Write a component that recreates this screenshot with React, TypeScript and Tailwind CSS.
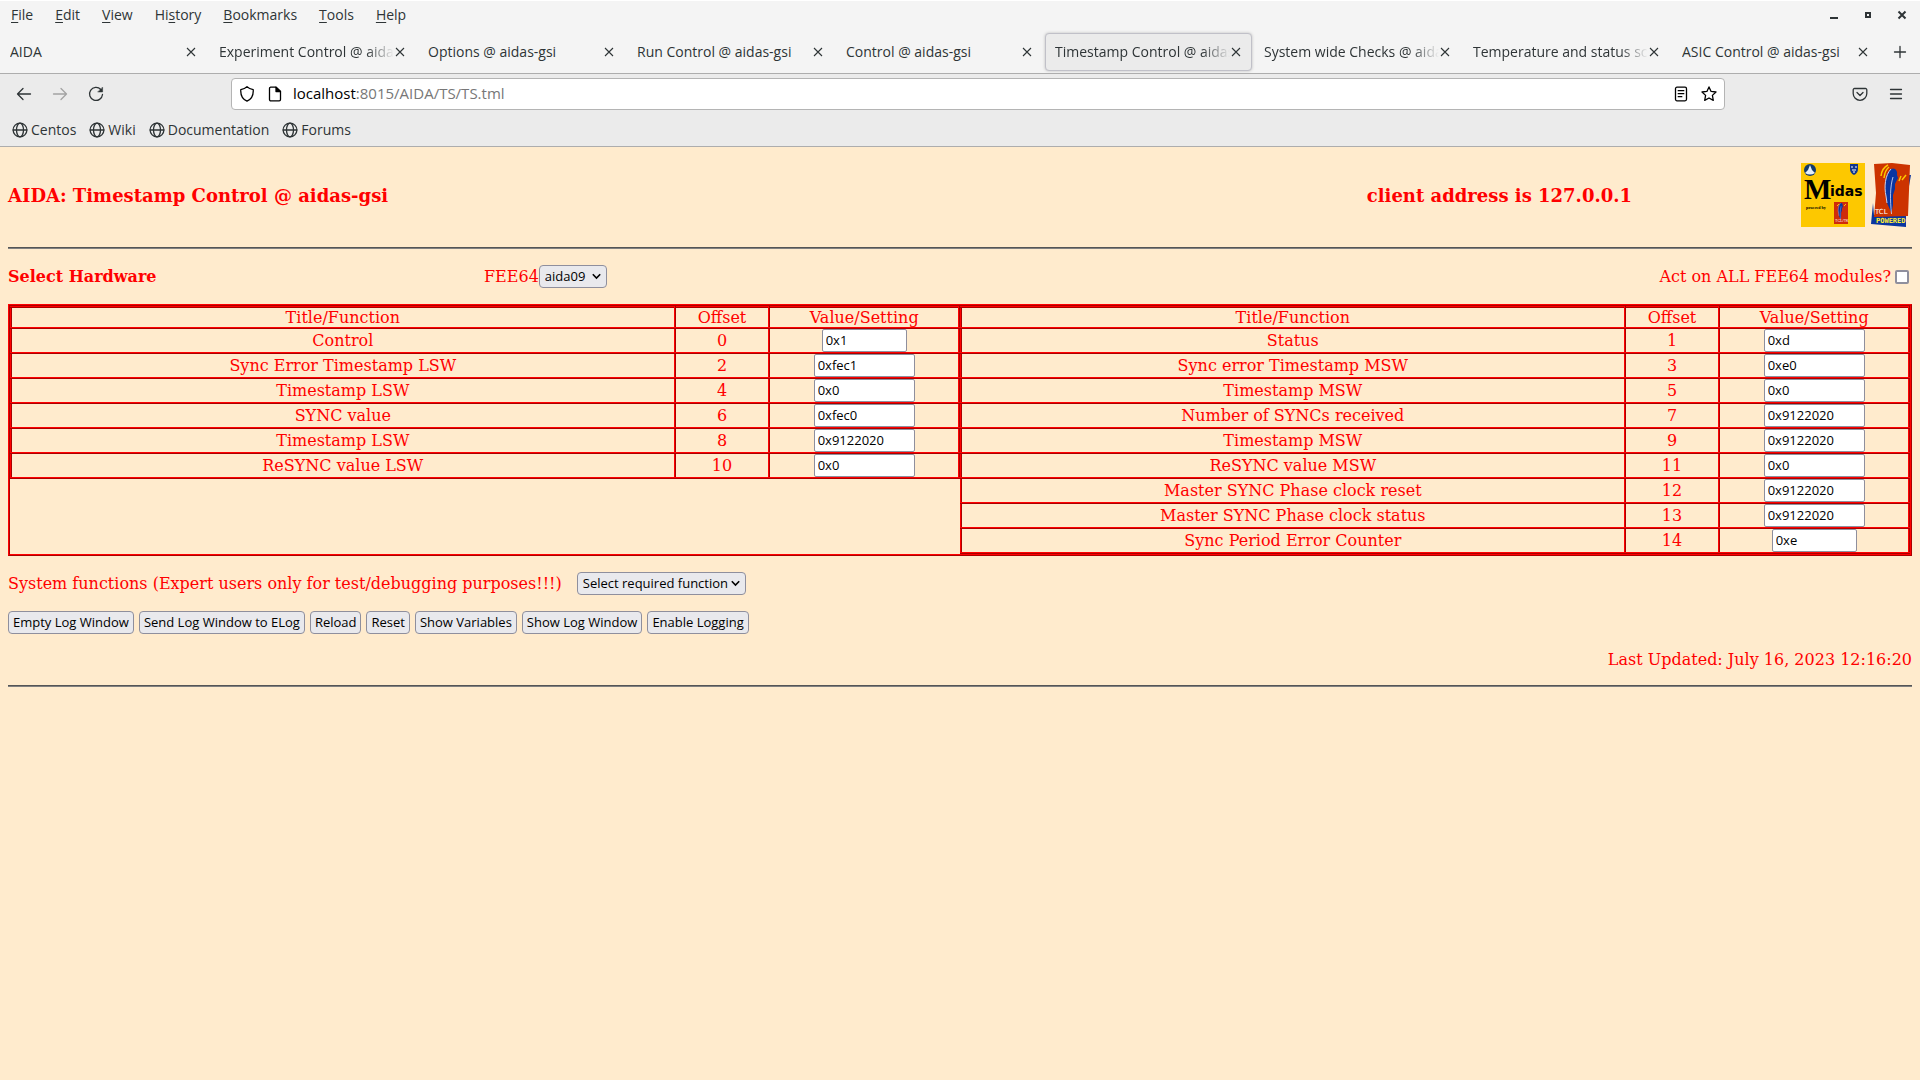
import clsx from 'clsx'
import type { ReactNode } from 'react'

const menus = [
  ['', 'F', 'ile'],
  ['', 'E', 'dit'],
  ['', 'V', 'iew'],
  ['Hi', 's', 'tory'],
  ['', 'B', 'ookmarks'],
  ['', 'T', 'ools'],
  ['', 'H', 'elp'],
]

const tabs = [
  'AIDA',
  'Experiment Control @ aidas-gsi',
  'Options @ aidas-gsi',
  'Run Control @ aidas-gsi',
  'Control @ aidas-gsi',
  'Timestamp Control @ aidas-gsi',
  'System wide Checks @ aidas-gsi',
  'Temperature and status scan',
  'ASIC Control @ aidas-gsi',
]

const bookmarks = ['Centos', 'Wiki', 'Documentation', 'Forums']

interface Register {
  title: string
  offset: number
  value: string
  narrow?: boolean
}

const leftRegisters: Register[] = [
  { title: 'Control', offset: 0, value: '0x1', narrow: true },
  { title: 'Sync Error Timestamp LSW', offset: 2, value: '0xfec1' },
  { title: 'Timestamp LSW', offset: 4, value: '0x0' },
  { title: 'SYNC value', offset: 6, value: '0xfec0' },
  { title: 'Timestamp LSW', offset: 8, value: '0x9122020' },
  { title: 'ReSYNC value LSW', offset: 10, value: '0x0' },
]

const rightRegisters: Register[] = [
  { title: 'Status', offset: 1, value: '0xd' },
  { title: 'Sync error Timestamp MSW', offset: 3, value: '0xe0' },
  { title: 'Timestamp MSW', offset: 5, value: '0x0' },
  { title: 'Number of SYNCs received', offset: 7, value: '0x9122020' },
  { title: 'Timestamp MSW', offset: 9, value: '0x9122020' },
  { title: 'ReSYNC value MSW', offset: 11, value: '0x0' },
  { title: 'Master SYNC Phase clock reset', offset: 12, value: '0x9122020' },
  { title: 'Master SYNC Phase clock status', offset: 13, value: '0x9122020' },
  { title: 'Sync Period Error Counter', offset: 14, value: '0xe', narrow: true },
]

const actions = [
  'Empty Log Window',
  'Send Log Window to ELog',
  'Reload',
  'Reset',
  'Show Variables',
  'Show Log Window',
  'Enable Logging',
]

function Icon({ children, className }: { children: ReactNode; className?: string }) {
  return (
    <svg
      width="16"
      height="16"
      viewBox="0 0 16 16"
      fill="none"
      stroke="currentColor"
      strokeWidth="1.3"
      strokeLinecap="round"
      strokeLinejoin="round"
      className={clsx('shrink-0', className)}
      aria-hidden="true"
    >
      {children}
    </svg>
  )
}

function MenuBar() {
  return (
    <div className="flex h-7 items-center justify-between border-t border-white pr-2.5 pl-[11px]">
      <nav className="flex gap-[22px]">
        {menus.map(([before, key, after]) => (
          <button key={before + key + after} type="button">
            {before}
            <span className="underline underline-offset-2">{key}</span>
            {after}
          </button>
        ))}
      </nav>
      <div className="flex items-center gap-[18px]">
        <button type="button" aria-label="Minimize">
          <Icon><path d="M4 11h8" strokeWidth="2" strokeLinecap="butt" /></Icon>
        </button>
        <button type="button" aria-label="Maximize">
          <Icon><rect x="6" y="6" width="4" height="4" strokeWidth="2" strokeLinejoin="miter" /></Icon>
        </button>
        <button type="button" aria-label="Close window">
          <Icon><path d="M4.5 4.5l7 7M11.5 4.5l-7 7" strokeWidth="2" strokeLinecap="butt" /></Icon>
        </button>
      </div>
    </div>
  )
}

function TabStrip() {
  return (
    <div className="flex h-[45px] items-center pt-0.5">
      <div className="flex min-w-0 grow">
        {tabs.map((title, i) => {
          const active = i === 5
          return (
            <div
              key={title}
              className={clsx(
                'mr-0.5 flex h-[38px] w-[207px] min-w-0 items-center rounded border pr-[7px] pl-[9px]',
                active ? 'border-[#c0c0c8] bg-[#ebebeb] shadow-[0_0_3px_#bbb]' : 'border-transparent',
              )}
            >
              <button
                type="button"
                className={clsx(
                  'min-w-0 grow overflow-hidden text-left whitespace-nowrap',
                  title.length > 24 && '[mask-image:linear-gradient(to_left,transparent,black_28px)]',
                )}
              >
                {title}
              </button>
              <button type="button" aria-label={`Close ${title}`} className="-ml-0.5">
                <Icon><path d="M4 4l8 8M12 4l-8 8" strokeWidth="1.1" strokeLinecap="butt" /></Icon>
              </button>
            </div>
          )
        })}
      </div>
      <button type="button" aria-label="New tab" className="mr-3">
        <Icon><path d="M8 2.500v11M2.500 8h11" /></Icon>
      </button>
    </div>
  )
}

function NavBar() {
  return (
    <div className="flex h-10 items-center px-4">
      <div className="flex w-[215px] gap-5">
        <button type="button" aria-label="Back">
          <Icon><path d="M14.500 8H1.500M7 2.500L1.500 8L7 13.500" /></Icon>
        </button>
        <button type="button" aria-label="Forward" className="text-[#a3a3a3]">
          <Icon><path d="M1.500 8H14.500M9 2.500L14.500 8L9 13.500" /></Icon>
        </button>
        <button type="button" aria-label="Reload page">
          <Icon>
            <path d="M12.800 3.500A6.500 6.500 0 1 0 14.500 8.500" />
            <path d="M14.600 1.400V6H10z" fill="currentColor" strokeWidth="0.5" />
          </Icon>
        </button>
      </div>
      <div className="flex h-8 min-w-0 grow items-center rounded border border-[#b4b4b4] bg-white px-[7px] text-black">
        <Icon><path d="M8 .8C6.500 2.200 4 3.200 1.800 3.600C1.400 9 3 13 8 15.200C13 13 14.600 9 14.200 3.600C12 3.200 9.500 2.200 8 .8z" /></Icon>
        <Icon className="ml-3">
          <path d="M3.500 1.200H9L13.500 5.500V13.500A1.300 1.300 0 0 1 12.200 14.800H3.800A1.300 1.300 0 0 1 2.500 13.500V2.500A1.300 1.300 0 0 1 3.800 1.200z" />
          <path d="M9 1.200V5.500H13.500z" fill="currentColor" />
        </Icon>
        <label htmlFor="address" className="sr-only">Address</label>
        <div className="relative ml-2.5 grow text-[15px]">
          <input
            id="address"
            defaultValue="localhost:8015/AIDA/TS/TS.tml"
            className="w-full text-transparent caret-black outline-none"
          />
          <div className="pointer-events-none absolute inset-0" aria-hidden="true">
            localhost<span className="text-[#777]">:8015/AIDA/TS/TS.tml</span>
          </div>
        </div>
        <Icon>
          <rect x="2.500" y="1.200" width="11" height="13.600" rx="1.500" />
          <path d="M5.200 4.700h5.600M5.200 7.700h5.600M5.200 10.700h3.600" />
        </Icon>
        <Icon className="ml-3"><path d="M8 .9l2.100 4.500l4.900.6l-3.600 3.400l.9 5L8 12l-4.300 2.400l.9-5L1 6l4.900-.6z" /></Icon>
      </div>
      <div className="flex w-[179px] justify-end gap-5">
        <button type="button" aria-label="Save to Pocket">
          <Icon>
            <path d="M2.500 2.500h11a1.300 1.300 0 0 1 1.300 1.300V7.500a6.800 6.800 0 0 1-13.600 0V3.800a1.300 1.300 0 0 1 1.300-1.300z" />
            <path d="M5 6.500l3 3l3-3" />
          </Icon>
        </button>
        <button type="button" aria-label="Application menu">
          <Icon><path d="M2.500 3.500h11M2.500 8h11M2.500 12.500h11" /></Icon>
        </button>
      </div>
    </div>
  )
}

function BookmarksBar() {
  return (
    <div className="flex h-8 items-center gap-[13px] px-3">
      {bookmarks.map((name) => (
        <a key={name} href="#" className="flex items-center gap-[3px]">
          <Icon>
            <circle cx="8" cy="8" r="6.900" />
            <ellipse cx="8" cy="8" rx="3.500" ry="6.900" />
            <path d="M1.200 8h13.600" />
          </Icon>
          {name}
        </a>
      ))}
    </div>
  )
}

function Feather() {
  return (
    <g>
      <path d="M20 6C24 4 27 8 26 12L27 15L24 21L24 26L22 32L22 42L20.500 50L16 40L15 33C13 26 14 12 20 6z" fill="#0a35a0" />
      <path d="M20 6C14 12 13 24 15 33L16 40" fill="none" stroke="#c9cfee" strokeWidth="1" />
      <path d="M22 14C19 24 19 36 20.500 51" fill="none" stroke="#dfe4f8" strokeWidth="0.8" />
    </g>
  )
}

function MidasLogo() {
  return (
    <svg width="64" height="64" viewBox="0 0 64 64" role="img" aria-label="Midas" className="block">
      <rect width="64" height="64" fill="#fdc800" />
      <circle cx="9" cy="7" r="6" fill="#123a6b" />
      <path d="M4 10L7 7L9 2L11 7L14 10Q9 13 4 10z" fill="#e4eef8" />
      <path d="M49 1h8v5q0 4-4 6q-4-2-4-6z" fill="#10368f" />
      <path d="M50 4h2M54 4h2M51 7h4M52 9h2" stroke="#fff" strokeWidth="1.2" />
      <text x="3" y="36" fontFamily="Liberation Serif, serif" fontSize="29" fontWeight="700">M</text>
      <text x="29" y="33" fontFamily="DejaVu Sans, sans-serif" fontSize="14" fontWeight="700">idas</text>
      <text x="5" y="46" fontFamily="Liberation Serif, serif" fontSize="4" fontWeight="700">powered by</text>
      <rect x="33" y="39" width="14" height="22" fill="#cf2b0a" />
      <g transform="translate(32 38) scale(.37)"><Feather /></g>
      <path d="M36 43l2-2M43 43l2-2" stroke="#fdc800" />
      <text x="34" y="59" fill="#fff" fontFamily="Liberation Sans, sans-serif" fontSize="4">TCL/TK</text>
    </svg>
  )
}

function TclLogo() {
  return (
    <svg width="40" height="64" viewBox="0 0 40 64" role="img" aria-label="TCL powered" className="block">
      <path d="M38 12h2l-4 22zM2 40L0 61L35 64V52H3z" fill="#0a35a0" />
      <path d="M3 1L21 0L39 2L37 53L3 54L5 30z" fill="#cc3300" />
      <path d="M10 13Q11 5 17 2M13 15Q14 7 18 4M28 18L30 13M31 17L35 12" fill="none" stroke="#fdc800" strokeWidth="1.5" />
      <Feather />
      <text x="4" y="51" fill="#fff" fontFamily="DejaVu Sans, sans-serif" fontSize="7">TCL</text>
      <text x="5" y="60" fill="#ffee33" fontFamily="DejaVu Sans Mono, monospace" fontSize="7" fontWeight="700">POWERED</text>
    </svg>
  )
}

const cell = 'border-2 border-[red] p-0 text-center font-normal [border-style:ridge]'

function RegisterTable({ label, rows }: { label: string; rows: Register[] }) {
  return (
    <table aria-label={label} className="w-1/2 table-fixed border-collapse">
      <thead>
        <tr className="h-[21px] leading-[19px]">
          <th className={clsx(cell, 'w-[70%]')}>Title/Function</th>
          <th className={clsx(cell, 'w-[10%]')}>Offset</th>
          <th className={clsx(cell, 'w-[20%]')}>Value/Setting</th>
        </tr>
      </thead>
      <tbody>
        {rows.map((row) => (
          <tr key={row.offset} className="h-[25px] leading-[19px]">
            <td className={cell}>{row.title}</td>
            <td className={cell}>{row.offset}</td>
            <td className={cell}>
              <input
                aria-label={`${row.title} ${row.offset}`}
                defaultValue={row.value}
                className={clsx(
                  'mx-auto block h-[23px] rounded-xs border border-[#8f8f9d] bg-white px-[3px] pb-0.5 font-["Open_Sans",sans-serif] text-[13px] text-black',
                  row.narrow ? 'w-[85px]' : 'w-[101px]',
                )}
              />
            </td>
          </tr>
        ))}
      </tbody>
    </table>
  )
}

function Select({ id, options, className }: { id: string; options: string[]; className: string }) {
  return (
    <span className="relative inline-flex">
      <select
        id={id}
        className={clsx(
          'h-[23px] appearance-none rounded border border-[#8f8f9d] bg-[#e9e9ed] pl-[5px] font-["Open_Sans",sans-serif] text-[13px] leading-[19px] text-black',
          className,
        )}
      >
        {options.map((option) => (
          <option key={option}>{option}</option>
        ))}
      </select>
      <svg width="9" height="7" viewBox="0 0 9 7" className="pointer-events-none absolute top-2 right-1.5" aria-hidden="true">
        <path d="M.8 1.200L4.500 5L8.200 1.200" fill="none" stroke="#000" strokeWidth="1.6" />
      </svg>
    </span>
  )
}

function Rule() {
  return <hr className="h-0.5 border-t border-b border-t-[#555] border-b-[#808080]" />
}

function Page() {
  return (
    <main className='px-2 font-["DejaVu_Serif",serif] text-base leading-[19px] text-[red]'>
      <header className="flex items-center pt-4 pb-5">
        <h1 className="grow basis-0 pt-0.5 text-lg leading-5 font-bold">AIDA: Timestamp Control @ aidas-gsi</h1>
        <h2 className="pt-0.5 text-lg leading-5 font-bold">client address is 127.0.0.1</h2>
        <div className="flex w-[280px] justify-end gap-1.5 pr-px">
          <MidasLogo />
          <TclLogo />
        </div>
      </header>
      <Rule />

      <section className="flex items-center pt-4 pb-4">
        <h2 className="w-1/4 font-bold">Select Hardware</h2>
        <div className="flex grow items-center">
          <label htmlFor="fee">FEE64</label>
          <Select id="fee" options={['aida09']} className="w-[68px]" />
        </div>
        <label className="flex items-center gap-1">
          Act on ALL FEE64 modules?
          <input type="checkbox" className="mr-[3px] size-3.5 appearance-none rounded-xs border-2 border-[#8f8f9d] bg-white" />
        </label>
      </section>

      <div className="flex items-start border-2 border-[red] [border-style:ridge]">
        <RegisterTable label="Timestamp registers, low words" rows={leftRegisters} />
        <RegisterTable label="Timestamp registers, high words" rows={rightRegisters} />
      </div>

      <section className="flex items-center gap-[15px] pt-4">
        <label htmlFor="system-function">System functions (Expert users only for test/debugging purposes!!!)</label>
        <Select id="system-function" options={['Select required function']} className="w-[169px]" />
      </section>

      <div className="flex gap-[5px] pt-4 pb-4">
        {actions.map((action) => (
          <button
            key={action}
            type="button"
            className='h-[23px] rounded border border-[#8f8f9d] bg-[#e9e9ed] px-1 font-["Open_Sans",sans-serif] text-[13px] leading-[19px] text-black'
          >
            {action}
          </button>
        ))}
      </div>

      <p className="pb-4 text-right">Last Updated: July 16, 2023 12:16:20</p>
      <Rule />
    </main>
  )
}

export default function App() {
  return (
    <div className="min-h-screen bg-[#ffebcd]">
      <div className='bg-[#f4f4f4] font-["Open_Sans",sans-serif] text-sm text-[#2e3436]'>
        <MenuBar />
        <TabStrip />
        <div className="border-t border-b border-[#adadad] bg-[#ebebeb]">
          <NavBar />
          <BookmarksBar />
        </div>
      </div>
      <Page />
    </div>
  )
}
